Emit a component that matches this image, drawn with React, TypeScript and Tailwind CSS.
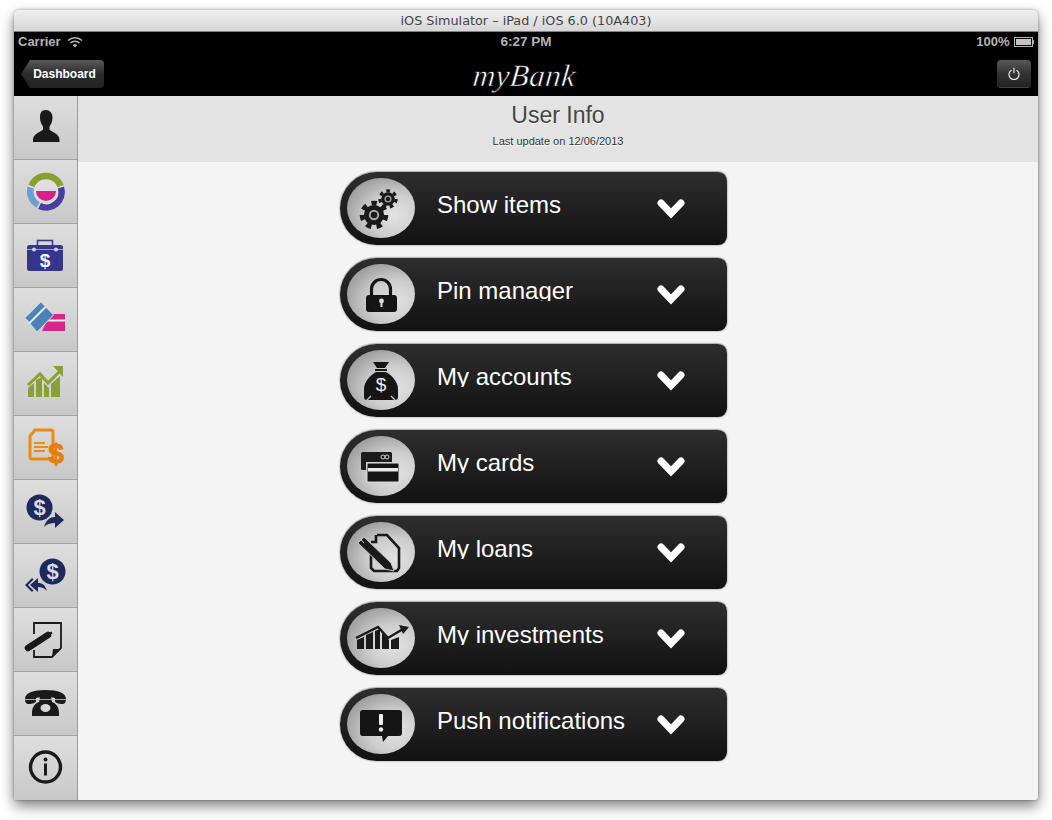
import React from "react";

const Gear = ({ cx, cy, r }: { cx: number; cy: number; r: number }) => (
  <g>
    <circle cx={cx} cy={cy} r={r * 0.72} fill="#1a1a1a" />
    <circle cx={cx} cy={cy} r={r * 0.85} fill="none" stroke="#1a1a1a" strokeWidth={r * 0.34} strokeDasharray={`${r * 0.38} ${r * 0.38}`} />
    <circle cx={cx} cy={cy} r={r * 0.3} fill="none" stroke="#a8a8a8" strokeWidth={r * 0.14} />
  </g>
);

// icons on the round badge, drawn in badge coordinates (68x60)
const badgeIcons: Record<string, React.ReactNode> = {
  gears: (
    <g>
      <Gear cx={27} cy={37} r={14} />
      <Gear cx={41} cy={21} r={9.5} />
    </g>
  ),
  lock: (
    <g fill="#151515">
      <path d="M24.500 32v-7a9.500 9.500 0 0 1 19 0v7" fill="none" stroke="#151515" strokeWidth="3.200" />
      <rect x="19" y="31" width="31" height="17" rx="3" />
      <circle cx="34.500" cy="37" r="2.400" fill="#ddd" />
      <rect x="33.500" y="37" width="2" height="6" fill="#ddd" />
    </g>
  ),
  bag: (
    <g fill="#151515">
      <path d="M26 12h16l-4 6h-8z" />
      <rect x="28" y="19" width="12" height="2" />
      <path d="M29 22h10c5 3 12 9 12 17v8c0 2-1 3-3 3H20c-2 0-3-1-3-3v-8c0-8 7-14 12-17z" />
      <path d="M20 50l4-4M48 50l-4-4" stroke="#ccc" strokeWidth="1.200" />
      <text x="34" y="41" fontSize="19" fill="#eee" textAnchor="middle" fontFamily="Liberation Sans, sans-serif">$</text>
    </g>
  ),
  cards: (
    <g>
      <rect x="14" y="16" width="31" height="18" rx="1.500" fill="#1c1c1c" />
      <circle cx="36" cy="21" r="2" fill="none" stroke="#ccc" strokeWidth="1" />
      <circle cx="40" cy="21" r="2" fill="none" stroke="#ccc" strokeWidth="1" />
      <rect x="19" y="26" width="27" height="21" fill="#ccc" />
      <rect x="20" y="27" width="32" height="19" rx="1" fill="#151515" stroke="#ddd" strokeWidth="1" />
      <rect x="21" y="32" width="30" height="3.500" fill="#e8e8e8" />
    </g>
  ),
  loan: (
    <g>
      <path d="M30 13h10l12 13v20l-2 3H27l-3-3V24" fill="none" stroke="#1a1a1a" strokeWidth="2.600" />
      <path d="M29 13v7h-5" fill="none" stroke="#1a1a1a" strokeWidth="2.600" />
      <path d="M11 21l6-6 27 26 3 8-9-2z" fill="#1a1a1a" stroke="#c4c4c4" strokeWidth="1" />
      <path d="M14 18l3 3" stroke="#c4c4c4" strokeWidth="1" />
    </g>
  ),
  invest: (
    <g>
      <path d="M10 41v-9l7-3v12zM19 41V27l7-3v17zM28 41V23l5-2v20zM35 41V25l7 7v9zM44 41v-9l8-3v12z" fill="#1a1a1a" />
      <path d="M9 30l22-11 10 11 15-9" fill="none" stroke="#1a1a1a" strokeWidth="2.400" />
      <path d="M52 17l10 2-6 7z" fill="#1a1a1a" />
    </g>
  ),
  push: (
    <g>
      <path d="M16 16h36a3 3 0 0 1 3 3v20a3 3 0 0 1-3 3H41l-5 6-1-6H16a3 3 0 0 1-3-3V19a3 3 0 0 1 3-3z" fill="#151515" />
      <rect x="32" y="20" width="4" height="11" rx="1" fill="#eee" />
      <circle cx="34" cy="35.500" r="2.200" fill="#eee" />
    </g>
  ),
};

const sideIcons: React.ReactNode[] = [
  <g key="user" fill="#1a1a1a">
    <path d="M31.500 14c4.500 0 7 3 7 7.500 0 4-1.500 7-3 9v3c1 2 10 4 10 10v2.500H19V43.500c0-6 9-8 10-10v-3c-1.500-2-3-5-3-9 0-4.500 1.500-7.500 5.500-7.500z" />
  </g>,
  <g key="donut" fill="none" strokeWidth="6.500">
    <circle cx="32" cy="32" r="18" fill="#eee" stroke="none" opacity="0.4" />
    <path d="M17.500 26a15.500 15.500 0 0 1 29 0" stroke="#87a12d" />
    <path d="M16.700 27.500a15.500 15.500 0 0 0 7.500 17.500" stroke="#6a9fd0" />
    <path d="M25.500 46a15.500 15.500 0 0 0 21.500-18.500" stroke="#4a3f9f" />
    <path d="M22 31h20a10 10 0 0 1-20 0z" fill="#d3228a" stroke="none" />
  </g>,
  <g key="case">
    <rect x="23.500" y="16.500" width="15" height="6" fill="none" stroke="#3a3a8a" strokeWidth="1.600" />
    <rect x="13" y="21" width="36" height="26" rx="2.500" fill="#36348c" />
    <rect x="13" y="25" width="36" height="1" fill="#9c9cd0" />
    <circle cx="20" cy="25.500" r="2" fill="#d0d0e8" />
    <circle cx="42" cy="25.500" r="2" fill="#d0d0e8" />
    <text x="31" y="43" fontSize="19" fontWeight="700" fill="#fff" textAnchor="middle" fontFamily="Liberation Sans, sans-serif">$</text>
  </g>,
  <g key="wallet">
    <path d="M36 26h15v17H28z" fill="#d9268c" />
    <rect x="32" y="31.500" width="19" height="2" fill="#eee" />
    <path d="M13 32L29 16l10.500 11L23 44z" fill="#4a82b8" stroke="#dcdcdc" strokeWidth="1" />
    <path d="M15 35.500L31.500 19" stroke="#e8e8e8" strokeWidth="2" />
    <path d="M12.500 31L28 15.500" stroke="#4a82b8" strokeWidth="3" />
  </g>,
  <g key="chart" fill="#8aa032">
    <path d="M14 45v-9l6-5v14zM22 45V28l6-3v20zM30 45V31l5 5v9zM37 45V32l9-8v21z" />
    <path d="M14 33l12-11 8 9 12-12" fill="none" stroke="#8aa032" strokeWidth="3" />
    <path d="M39 14h10v11z" />
  </g>,
  <g key="doc">
    <path d="M21 14h16a2 2 0 0 1 2 2v27H18a2 2 0 0 1-2-2V20z" fill="none" stroke="#ee8a12" strokeWidth="3" />
    <rect x="20" y="26" width="11" height="2" fill="#ee8a12" />
    <rect x="20" y="30" width="14" height="2" fill="#ee8a12" />
    <rect x="20" y="34" width="11" height="2" fill="#ee8a12" />
    <text x="42" y="47" fontSize="28" fontWeight="700" fill="#e67e0c" stroke="#e67e0c" strokeWidth="1" textAnchor="middle" fontFamily="Liberation Sans, sans-serif">$</text>
  </g>,
  <g key="send">
    <circle cx="25.500" cy="27.500" r="13" fill="#1f2a5c" />
    <text x="25.500" y="35" fontSize="22" fontWeight="700" fill="#d8dce8" textAnchor="middle" fontFamily="Liberation Sans, sans-serif">$</text>
    <path d="M30 47c2-7 6-10 11-10v-5l9 8-9 8v-5c-5 0-8 1-11 4z" fill="#1f2a5c" />
  </g>,
  <g key="receive">
    <circle cx="38.500" cy="27.500" r="13" fill="#1f2a5c" />
    <text x="38.500" y="35" fontSize="22" fontWeight="700" fill="#d8dce8" textAnchor="middle" fontFamily="Liberation Sans, sans-serif">$</text>
    <path d="M33 47c-2-6-4-8-9-8v-5l-8 7 8 7v-5c4 0 6 1 9 4z" fill="#1f2a5c" />
    <path d="M18 34l-7 7 7 7 1.500-1.500L14 41l5.500-5.500z" fill="#1f2a5c" />
  </g>,
  <g key="note">
    <path d="M20 26V15h27v25l-9 9H20v-7" fill="none" stroke="#1a1a1a" strokeWidth="1.800" />
    <path d="M38 49l1-8h8z" fill="#1a1a1a" />
    <path d="M14 40l20-13" stroke="#1a1a1a" strokeWidth="6.500" strokeLinecap="round" />
    <path d="M36 25.500l2-1" stroke="#1a1a1a" strokeWidth="2.500" />
  </g>,
  <g key="phone" fill="#1a1a1a">
    <path d="M25 30l1-5h11l1 5c5 2 7 6 7 11v3H18v-3c0-5 2-9 7-11z" />
    <path d="M11 27c0-6 8-9 20.500-9S52 21 52 27c0 3-1 5-4 5s-7-1-7-3v-3c-3-1-5-1-9.500-1s-6.500 0-9.500 1v3c0 2-4 3-7 3s-4-2-4-5z" />
    <rect x="11" y="27" width="41" height="0.800" fill="#ccc" />
    <ellipse cx="31.500" cy="36" rx="5" ry="4" fill="#d8d8d8" />
  </g>,
  <g key="info">
    <circle cx="31.500" cy="31" r="15" fill="none" stroke="#1a1a1a" strokeWidth="3.400" />
    <circle cx="31.500" cy="23.500" r="2" fill="#1a1a1a" />
    <rect x="30" y="27.500" width="3" height="12" fill="#1a1a1a" />
  </g>,
];

const rows = [
  { label: "Show items", icon: "gears" },
  { label: "Pin manager", icon: "lock" },
  { label: "My accounts", icon: "bag" },
  { label: "My cards", icon: "cards" },
  { label: "My loans", icon: "loan" },
  { label: "My investments", icon: "invest" },
  { label: "Push notifications", icon: "push" },
];

export default function App() {
  return (
    <div className="w-[1052px] h-[820px] bg-white pl-[14px] pt-[10px] overflow-hidden font-['Liberation_Sans',sans-serif]">
      <div className="w-[1024px] h-[790px] flex flex-col rounded-t-[5px] rounded-b-[3px] overflow-hidden bg-[#f4f4f4] shadow-[0_6px_14px_rgba(0,0,0,0.5),0_0_3px_rgba(0,0,0,0.35)]">
        {/* Simulator title bar */}
        <div className="h-[22px] shrink-0 flex items-center justify-center bg-gradient-to-b from-[#f0f0f0] to-[#d6d6d6] border-b border-[#808080] text-[12.8px] text-[#444] font-['DejaVu_Sans',sans-serif]">
          iOS Simulator – iPad / iOS 6.0 (10A403)
        </div>

        {/* Status bar + nav */}
        <div className="h-[64px] shrink-0 bg-black flex flex-col">
          <div className="h-[20px] px-[4px] flex items-center justify-between text-[13px] text-[#b4b4b4] font-bold">
            <div className="flex items-center gap-[6px] w-[200px]">
              <span>Carrier</span>
              <svg width="16" height="12" viewBox="0 0 16 12" fill="none" stroke="#b4b4b4" strokeWidth="1.500">
                <path d="M1 4.500a10 10 0 0 1 14 0" />
                <path d="M3.500 7a6.500 6.500 0 0 1 9 0" />
                <path d="M8 11.500L5.800 9.300a3 3 0 0 1 4.400 0z" fill="#b4b4b4" stroke="none" />
              </svg>
            </div>
            <span className="text-[13.500px]">6:27 PM</span>
            <div className="flex items-center justify-end gap-[4px] w-[200px]">
              <span>100%</span>
              <div className="flex items-center">
                <div className="w-[19px] h-[10px] border border-[#b4b4b4] p-px">
                  <div className="w-full h-full bg-[#c4c4c4]" />
                </div>
                <div className="w-[1.500px] h-[4px] bg-[#b4b4b4]" />
              </div>
            </div>
          </div>
          <div className="flex-1 flex items-start justify-between px-[7px] pt-[8px]">
            <div className="w-[200px]">
              <button className="block w-[83px] h-[28px] rounded-r-[4px] pl-[4px] [clip-path:polygon(0_50%,9px_0,100%_0,100%_100%,9px_100%)] bg-gradient-to-b from-[#5a5a5a] via-[#2c2c2c] to-[#222] text-[12px] font-bold text-white text-center">
                Dashboard
              </button>
            </div>
            <span className="-ml-[4px] -mt-[2px] text-[31px] leading-[36px] text-white italic font-['Liberation_Serif',serif] tracking-[0.5px] [-webkit-text-stroke:0.6px_#000] -skew-x-6">myBank</span>
            <div className="w-[200px] flex justify-end">
              <button className="w-[34px] h-[28px] rounded-[4px] bg-gradient-to-b from-[#585858] via-[#333] to-[#222] border-b border-[#444] flex items-center justify-center">
                <svg width="12" height="13" viewBox="0 0 12 13" fill="none" stroke="#e4e4e4" strokeWidth="1.200">
                  <path d="M3.500 3.200a5 5 0 1 0 5 0" />
                  <path d="M6 0.800v5.500" />
                </svg>
              </button>
            </div>
          </div>
        </div>

        <div className="flex-1 flex min-h-0">
          {/* Side menu */}
          <div className="w-[64px] shrink-0 flex flex-col border-r border-[#9c9c9c]">
            {sideIcons.map((icon, i) => (
              <div key={i} className="h-[64px] shrink-0 border-b border-[#a2a2a2] last:border-b-0 bg-gradient-to-b from-[#dedede] to-[#c8c8c8]">
                <svg width="63" height="63" viewBox="0 0 63 63" className="block">
                  {icon}
                </svg>
              </div>
            ))}
          </div>

          <div className="flex-1 flex flex-col min-w-0">
            <div className="h-[66px] shrink-0 bg-[#e3e3e3] flex flex-col items-center pt-[4px]">
              <h1 className="text-[23px] leading-[30px] text-[#444] [text-shadow:0_1px_0_#fff]">User Info</h1>
              <p className="text-[11px] leading-[13px] mt-[5px] text-[#333] [text-shadow:0_1px_0_#fff]">Last update on 12/06/2013</p>
            </div>

            {/* Option rows */}
            <div className="flex flex-col gap-[13px] pt-[10px] pl-[262px]">
              {rows.map((r) => (
                <div key={r.label} className="w-[387px] h-[73px] flex rounded-l-[37px] rounded-r-[9px] bg-gradient-to-b from-[#2e2e2e] to-[#121212] shadow-[0_0_2px_rgba(0,0,0,0.55),0_-1px_1px_rgba(0,0,0,0.15)]">
                  <div className="w-[68px] h-[60px] ml-[7px] mt-[6px] shrink-0 rounded-[50%] bg-[radial-gradient(ellipse_at_70%_62%,#e2e2e2_0%,#cdcdcd_40%,#808080_100%)]">
                    <svg width="68" height="60" viewBox="0 0 68 60" className="block">
                      {badgeIcons[r.icon]}
                    </svg>
                  </div>
                  <div className="flex-1 ml-[22px] mt-[19px] h-[24px] overflow-hidden text-[24px] leading-[28px] text-white whitespace-nowrap">
                    {r.label}
                  </div>
                  <svg width="32" height="24" viewBox="0 0 32 24" className="mt-[25px] mr-[40px] shrink-0" fill="none">
                    <path d="M6 6l10 10.500L26 6" stroke="#fff" strokeWidth="7" strokeLinecap="round" strokeLinejoin="miter" />
                  </svg>
                </div>
              ))}
            </div>
          </div>
        </div>
      </div>
    </div>
  );
}
